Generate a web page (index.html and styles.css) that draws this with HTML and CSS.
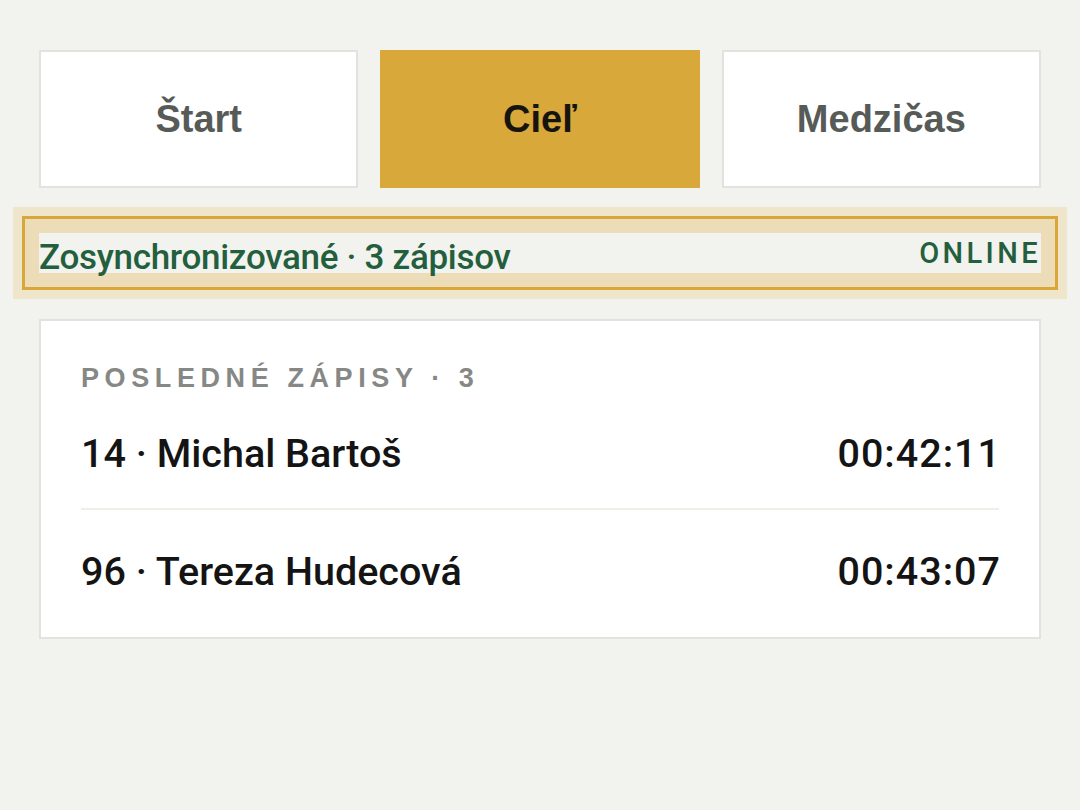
FILE: index.html
```html
<!DOCTYPE html>
<html lang="sk">
<head>
<meta charset="utf-8">
<title>Cieľ</title>
<link rel="stylesheet" href="styles.css">
</head>
<body>
<main class="page">
  <nav class="tabs">
    <div class="tab">Štart</div>
    <div class="tab tab-active">Cieľ</div>
    <div class="tab">Medzičas</div>
  </nav>
  <div class="sync">
    <span class="sync-text">Zosynchronizované · 3 zápisov</span>
    <span class="sync-status">ONLINE</span>
  </div>
  <section class="card">
    <h2 class="card-title">POSLEDNÉ ZÁPISY · 3</h2>
    <div class="row">
      <span class="row-name">14 · Michal Bartoš</span>
      <span class="row-time">00:42:11</span>
    </div>
    <div class="row">
      <span class="row-name">96 · Tereza Hudecová</span>
      <span class="row-time">00:43:07</span>
    </div>
  </section>
</main>
</body>
</html>
```
FILE: styles.css
```css
html, body {
  margin: 0;
  padding: 0;
  background: #f2f2ee;
}
body {
  font-family: "Roboto", "Liberation Sans", sans-serif;
}
.page {
  padding: 50px 39px 0 39px;
  display: flex;
  flex-direction: column;
}
.tabs {
  display: grid;
  grid-template-columns: 1fr 1fr 1fr;
  gap: 22px;
}
.tab {
  box-sizing: border-box;
  height: 138px;
  display: flex;
  align-items: center;
  justify-content: center;
  background: #ffffff;
  border: 2px solid #e2e3de;
  font-family: "Liberation Sans", Arial, sans-serif;
  font-weight: 700;
  font-size: 38px;
  color: #565b58;
}
.tab-active {
  background: #d9a83a;
  border-color: #d9a83a;
  color: #16140f;
}
.sync {
  margin-top: 45px;
  height: 40px;
  display: flex;
  justify-content: space-between;
  align-items: flex-start;
  background: #f2f2ee;
  outline: 3px solid #d9a63a;
  outline-offset: 14px;
  box-shadow: 0 0 0 15px #ecdcb8, 0 0 0 26px #efe5cb;
}
.sync-text {
  margin-top: 5px;
  line-height: 40px;
  font-size: 35px;
  font-weight: 500;
  color: #245f3d;
  letter-spacing: -0.3px;
}
.sync-status {
  line-height: 40px;
  font-size: 29px;
  font-weight: 500;
  letter-spacing: 3.4px;
  color: #245f3d;
}
.card {
  margin-top: 46px;
  box-sizing: border-box;
  height: 320px;
  background: #ffffff;
  border: 2px solid #e3e3de;
  padding: 42px 40px 0 40px;
}
.card-title {
  margin: 0;
  font-family: "Liberation Sans", Arial, sans-serif;
  font-weight: 700;
  font-size: 27px;
  line-height: 30px;
  letter-spacing: 5.6px;
  color: #858885;
}
.row {
  display: flex;
  justify-content: space-between;
  padding: 37px 0 30px 0;
  line-height: 48px;
  font-size: 39.5px;
  font-weight: 500;
  color: #141414;
}
.row + .row {
  border-top: 2px solid #efefea;
  padding-top: 38px;
}
.row-time {
  letter-spacing: 1px;
  margin-right: -2px;
}
```
